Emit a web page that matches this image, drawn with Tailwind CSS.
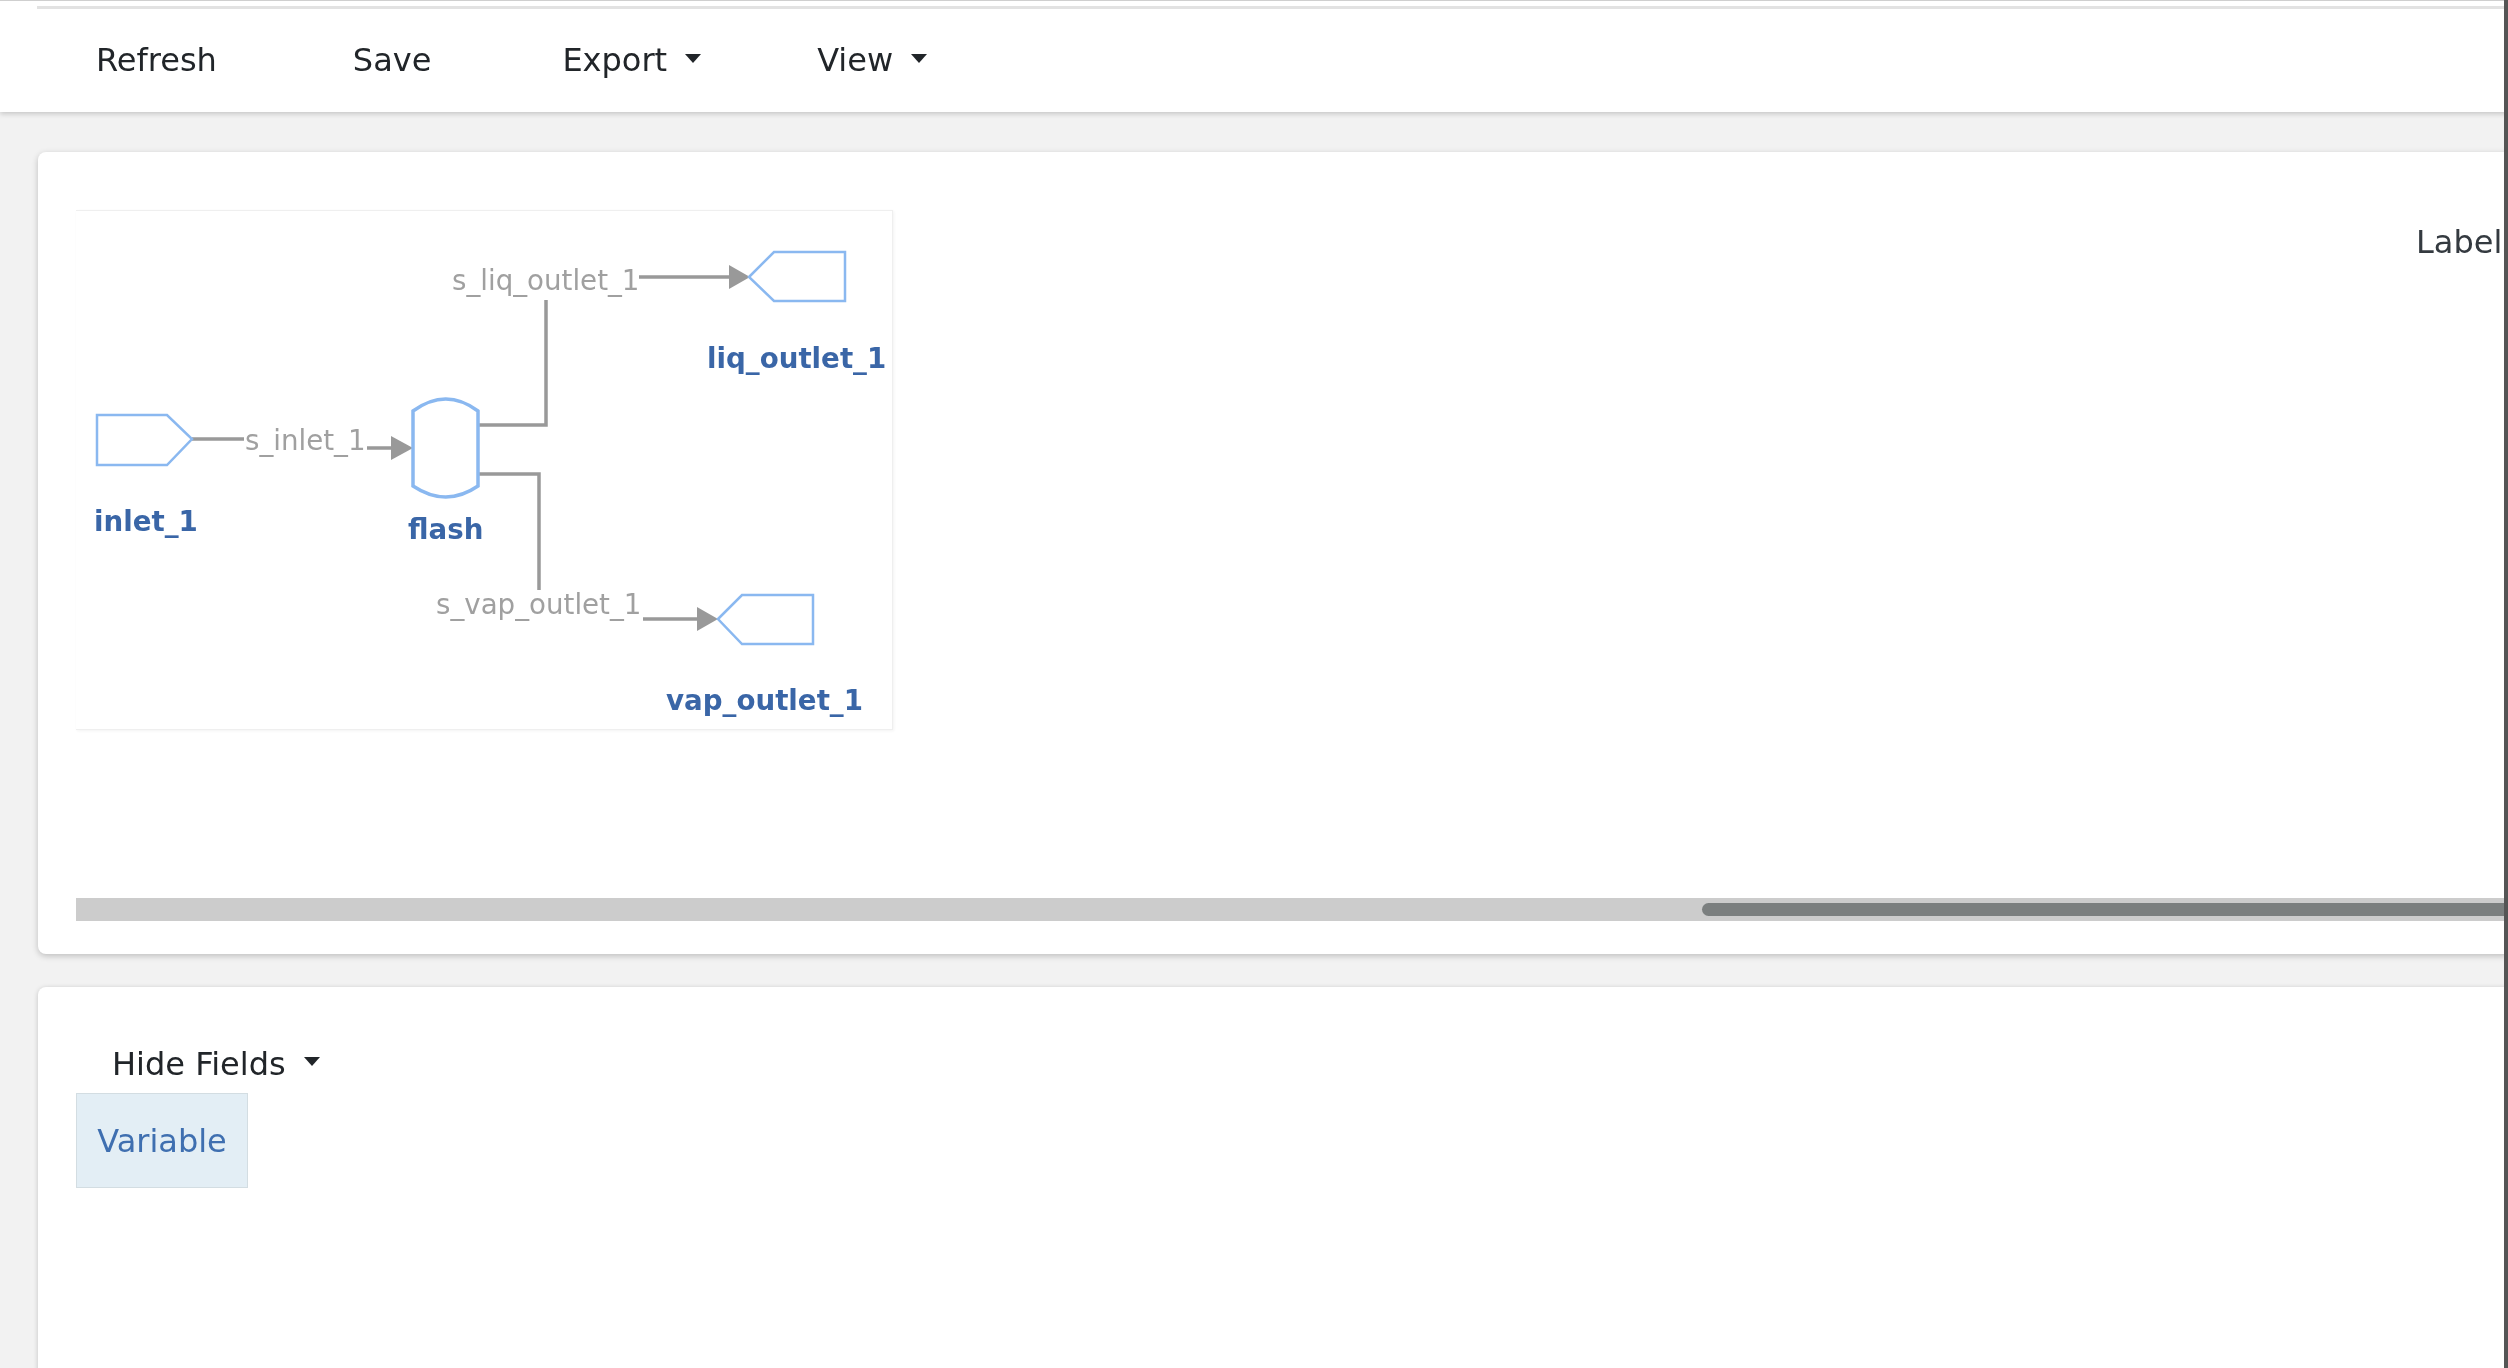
<!DOCTYPE html>
<html lang="en">
<head>
  <meta charset="UTF-8" />
  <title>Flowsheet</title>
  <script src="https://cdn.jsdelivr.net/npm/@tailwindcss/browser@4"></script>
</head>
<body class="m-0 overflow-hidden bg-[#f2f2f2] font-['DejaVu_Sans',sans-serif] text-[32px] text-[#212529]">
  <div class="relative h-[1368px] w-[2508px] overflow-hidden blur-[0.6px]">

    <!-- toolbar -->
    <header class="h-[112px] border-t border-t-[#cfcfcf] bg-white shadow-[0_2px_5px_rgba(0,0,0,0.18)]">
      <div class="ml-[37px] mt-[5px] h-[3px] bg-[#e2e2e2]"></div>
      <nav class="flex items-center gap-[136px] pl-[96px] pt-[28px] leading-[46px]">
        <button>Refresh</button>
        <button>Save</button>
        <button class="-ml-[5px] flex items-center gap-[18px]">Export
          <span class="mb-[4px] h-0 w-0 border-x-[8px] border-t-[9px] border-x-transparent border-t-[#212529]"></span>
        </button>
        <button class="-ml-[20px] flex items-center gap-[18px]">View
          <span class="mb-[4px] h-0 w-0 border-x-[8px] border-t-[9px] border-x-transparent border-t-[#212529]"></span>
        </button>
      </nav>
    </header>

    <!-- flowsheet card -->
    <section class="ml-[38px] mt-[40px] h-[802px] rounded-l-[8px] bg-white pl-[38px] pt-[58px] shadow-[0_2px_6px_rgba(0,0,0,0.22)]">
      <div class="flex h-[688px] items-start">
        <div class="h-[520px] w-[817px] shrink-0 border-y border-r border-[#efefef] shadow-[1px_1px_3px_rgba(0,0,0,0.05)]">
          <svg class="h-[520px] w-[817px]" viewBox="76 210 817 520" font-size="27.7">
            <g fill="none" stroke="#999999" stroke-width="3.5">
              <path d="M192 438H244" />
              <path d="M367 447H395" />
              <path d="M639 276H732" />
              <path d="M643 618H700" />
              <path d="M479 424H546V299" />
              <path d="M479 473H539V589" />
            </g>
            <g fill="#999999">
              <path d="M391 435L413 447L391 459Z" />
              <path d="M729 264L750 276L729 288Z" />
              <path d="M697 606L718 618L697 630Z" />
            </g>
            <g fill="none" stroke="#8ab8f0" stroke-width="2.5">
              <path d="M97 414H167L192 438L167 464H97Z" />
              <path d="M749 276L774 251H845V300H774Z" />
              <path d="M718 618L742 594H813V643H742Z" />
              <path stroke-width="3.5" d="M413 410Q446 386 478 410V485Q446 507 413 485Z" />
            </g>
            <g fill="#a0a0a0">
              <text x="245" y="449">s_inlet_1</text>
              <text x="452" y="289">s_liq_outlet_1</text>
              <text x="436" y="613">s_vap_outlet_1</text>
            </g>
            <g fill="#3a66a7" font-weight="700">
              <text x="94" y="530">inlet_1</text>
              <text x="408" y="537.5">flash</text>
              <text x="707" y="367">liq_outlet_1</text>
              <text x="666" y="709">vap_outlet_1</text>
            </g>
          </svg>
        </div>
        <div class="ml-[1523px] w-[88px] overflow-hidden whitespace-nowrap pt-[9px] leading-[46px] text-[#343a40]">Labels</div>
      </div>
      <div class="flex h-[23px] items-center bg-[#cccccc]">
        <div class="ml-[1626px] h-[13px] flex-1 rounded-l-full bg-[#7b7f7f]"></div>
      </div>
    </section>

    <!-- table card -->
    <section class="ml-[38px] mt-[33px] h-[400px] rounded-tl-[8px] bg-white pl-[38px] pt-[47px] shadow-[0_1px_5px_rgba(0,0,0,0.2)]">
      <button class="ml-[36px] flex h-[59px] items-center gap-[18px]">Hide Fields
        <span class="mb-[4px] h-0 w-0 border-x-[8px] border-t-[9px] border-x-transparent border-t-[#212529]"></span>
      </button>
      <div class="flex h-[95px] w-[172px] items-center justify-center border border-[#d3dde2] bg-[#e3eef5] text-[#3f6fb0]">Variable</div>
    </section>

    <!-- window edge -->
    <div class="absolute inset-y-0 right-0 w-[4px] bg-[#555555]"></div>
  </div>
</body>
</html>
